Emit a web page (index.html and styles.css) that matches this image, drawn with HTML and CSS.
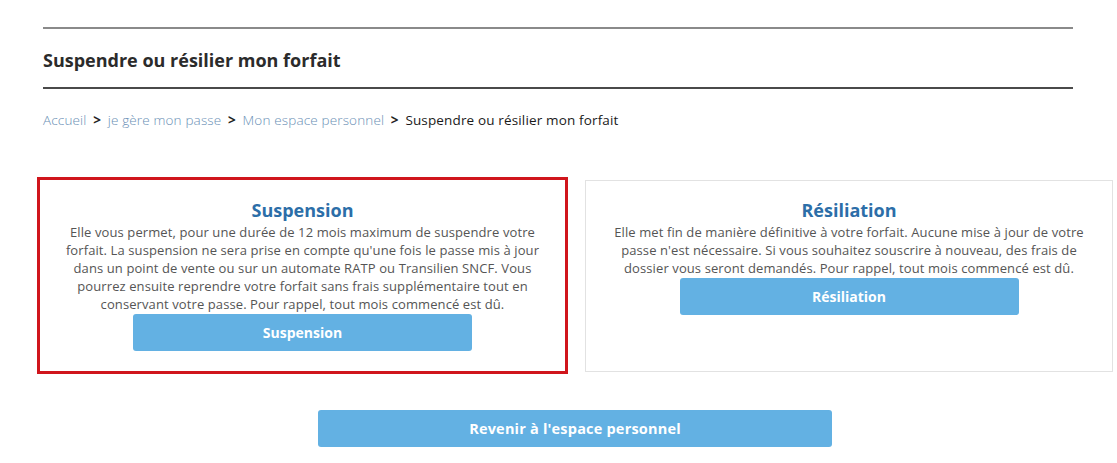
FILE: index.html
```html
<!DOCTYPE html>
<html lang="fr">

<head>
    <meta charset="UTF-8">
    <meta name="viewport" content="width=device-width, initial-scale=1.0">
    <title>Suspendre ou résilier mon forfait</title>
    <link rel="stylesheet" href="styles.css">
</head>

<body>
    <!-- en-tête de page -->
    <div class="page-head">
        <h1 class="page-title">Suspendre ou résilier mon forfait</h1>
        <nav class="breadcrumb">
            <a href="#">Accueil</a>
            <span class="sep">&gt;</span>
            <a href="#">je gère mon passe</a>
            <span class="sep">&gt;</span>
            <a href="#">Mon espace personnel</a>
            <span class="sep">&gt;</span>
            <span class="current">Suspendre ou résilier mon forfait</span>
        </nav>
    </div>

    <div class="choices">
        <div class="cards">
            <div class="card card-selected">
                <h3 class="card-title">Suspension</h3>
                <p class="card-text">Elle vous permet, pour une durée de 12 mois maximum de suspendre votre forfait. La suspension ne sera prise en compte qu'une fois le passe mis à jour dans un point de vente ou sur un automate RATP ou Transilien SNCF. Vous pourrez ensuite reprendre votre forfait sans frais supplémentaire tout en conservant votre passe. Pour rappel, tout mois commencé est dû.</p>
                <a href="#" class="btn">Suspension</a>
            </div>
            <div class="card">
                <h3 class="card-title">Résiliation</h3>
                <p class="card-text">Elle met fin de manière définitive à votre forfait. Aucune mise à jour de votre passe n'est nécessaire. Si vous souhaitez souscrire à nouveau, des frais de dossier vous seront demandés. Pour rappel, tout mois commencé est dû.</p>
                <a href="#" class="btn">Résiliation</a>
            </div>
        </div>

        <a href="#" class="btn btn-back">Revenir à l'espace personnel</a>
    </div>
</body>

</html>
```

FILE: styles.css
```css
body {
    font-family: "Open Sans", Arial, sans-serif;
    background-color: #fff;
    color: #444;
    margin: 0;
    padding: 0;
}

a {
    text-decoration: none;
}

/* en-tête */
.page-head {
    width: 1030px;
    margin-left: 43px;
    padding-top: 27px;
}

.page-title {
    margin: 0;
    padding: 19px 0 15px;
    border-top: 2px solid #8a8a8a;
    border-bottom: 2px solid #4a4a4a;
    font-size: 18px;
    line-height: 24px;
    font-weight: bold;
    color: #2b2b2b;
}

.breadcrumb {
    margin-top: 22px;
    font-size: 13.5px;
    line-height: 18px;
    letter-spacing: 0.15px;
}

.breadcrumb a {
    color: #6a8fb5;
    font-weight: 300;
}

.breadcrumb .sep {
    color: #222;
    font-weight: bold;
    margin: 0 3px;
}

.breadcrumb .current {
    color: #1a1a1a;
}

/* choix */
.choices {
    width: 1076px;
    margin-left: 37px;
    margin-top: 48px;
}

.cards {
    display: flex;
    align-items: center;
    gap: 17px;
}

.card {
    width: 528px;
    height: 192px;
    box-sizing: border-box;
    border: 1px solid #e2e2e2;
    padding: 16px 20px 0;
    text-align: center;
}

.card-selected {
    width: 531px;
    height: 197px;
    border: 3px solid #d0151c;
    padding-top: 17px;
}

.card-title {
    margin: 0;
    font-size: 18px;
    line-height: 26px;
    font-weight: bold;
    color: #2c6ea8;
}

.card-text {
    margin: 0;
    font-size: 13px;
    line-height: 18px;
    letter-spacing: 0.1px;
    color: #555;
}

.btn {
    display: block;
    width: 339px;
    height: 37px;
    line-height: 37px;
    margin: 1px auto 0;
    background-color: #63b1e3;
    border-radius: 3px;
    color: #fff;
    font-size: 14px;
    font-weight: bold;
    text-align: center;
}

.btn-back {
    width: 514px;
    margin-top: 36px;
    font-size: 14.5px;
    letter-spacing: 0.2px;
}
```
